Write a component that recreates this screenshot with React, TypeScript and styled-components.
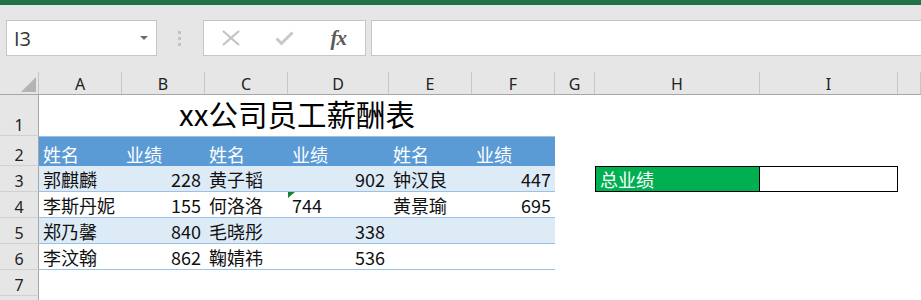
import React from 'react';
import styled, { createGlobalStyle } from 'styled-components';

const GlobalStyle = createGlobalStyle`
  html, body {
    margin: 0;
    padding: 0;
    background: #fff;
    overflow: hidden;
  }
  body {
    font-family: "Noto Sans", "Noto Sans CJK SC", sans-serif;
  }
`;

const Window = styled.div`
  width: 921px;
  height: 300px;
  overflow: hidden;
  display: flex;
  flex-direction: column;
`;

const TitleStrip = styled.div`
  height: 5px;
  background: #217346;
  flex-shrink: 0;
`;

const Toolbar = styled.div`
  height: 67px;
  box-sizing: border-box;
  background: #e6e6e6;
  display: flex;
  align-items: flex-start;
  padding: 15px 0 0 6px;
  flex-shrink: 0;
`;

const NameBox = styled.div`
  width: 151px;
  height: 36px;
  box-sizing: border-box;
  background: #fff;
  border: 1px solid #c6c6c6;
  display: flex;
  align-items: center;
  justify-content: space-between;
  padding: 0 8px 0 7px;
  font-family: "Open Sans", sans-serif;
  font-size: 20px;
  color: #333;
`;

const DropArrow = styled.span`
  width: 0;
  height: 0;
  border-left: 4px solid transparent;
  border-right: 4px solid transparent;
  border-top: 4px solid #6d6d6d;
`;

const Grip = styled.div`
  margin: 11px 0 0 21px;
  display: flex;
  flex-direction: column;
  gap: 3px;
  & > span {
    width: 3px;
    height: 3px;
    background: #c3c3c3;
  }
`;

const FxBox = styled.div`
  margin-left: 22px;
  width: 163px;
  height: 36px;
  box-sizing: border-box;
  background: #fff;
  border: 1px solid #c6c6c6;
  display: flex;
`;

const FxSlot = styled.div`
  width: 54px;
  display: flex;
  align-items: center;
  justify-content: center;
`;

const FxLabel = styled.span`
  font-family: "Liberation Serif", serif;
  font-style: italic;
  font-weight: bold;
  font-size: 21px;
  color: #5a5a5a;
  letter-spacing: -1px;
`;

const FormulaInput = styled.div`
  margin-left: 5px;
  margin-right: -2px;
  flex: 1;
  height: 36px;
  box-sizing: border-box;
  background: #fff;
  border: 1px solid #c6c6c6;
`;

const Sheet = styled.div`
  flex: 1;
  display: flex;
  flex-direction: column;
  background: #fff;
  overflow: hidden;
`;

const HeaderRow = styled.div`
  display: flex;
  height: 23px;
  box-sizing: border-box;
  background: #e6e6e6;
  border-bottom: 1px solid #a6a6a6;
  flex-shrink: 0;
`;

const Corner = styled.div`
  width: 39px;
  box-sizing: border-box;
  border-right: 1px solid #c6c6c6;
  display: flex;
  align-items: flex-end;
  justify-content: flex-end;
  padding: 0 2px 2px 0;
`;

const ColHead = styled.div<{ $w?: number }>`
  width: ${p => (p.$w ? `${p.$w}px` : 'auto')};
  flex: ${p => (p.$w ? 'none' : '1')};
  box-sizing: border-box;
  border-right: 1px solid #c6c6c6;
  display: flex;
  align-items: center;
  justify-content: center;
  font-size: 16px;
  line-height: 1;
  color: #222;
  padding-top: 2px;
`;

const Row = styled.div<{ $h: number }>`
  display: flex;
  height: ${p => p.$h}px;
  flex-shrink: 0;
`;

const RowHead = styled.div`
  width: 39px;
  box-sizing: border-box;
  background: #e6e6e6;
  border-right: 1px solid #a6a6a6;
  border-bottom: 1px solid #d0d0d0;
  display: flex;
  align-items: flex-end;
  justify-content: center;
  padding-bottom: 2px;
  font-size: 16px;
  line-height: 1;
  color: #222;
`;

const Cell = styled.div<{
  $w?: number;
  $align?: 'left' | 'right' | 'center';
  $fill?: string;
  $color?: string;
  $line?: string;
  $top?: string;
  $frame?: boolean;
}>`
  position: relative;
  width: ${p => (p.$w ? `${p.$w}px` : 'auto')};
  flex: ${p => (p.$w ? 'none' : '1')};
  box-sizing: border-box;
  display: flex;
  align-items: flex-end;
  justify-content: ${p =>
    p.$align === 'right' ? 'flex-end' : p.$align === 'center' ? 'center' : 'flex-start'};
  padding: 0 4px 3px 4px;
  background: ${p => p.$fill || 'transparent'};
  color: ${p => p.$color || '#111'};
  border-bottom: ${p => (p.$line ? `1px solid ${p.$line}` : 'none')};
  border-top: ${p => (p.$top ? `1px solid ${p.$top}` : 'none')};
  ${p => (p.$frame ? 'border: 1px solid #000;' : '')}
  font-family: "Noto Sans CJK SC", sans-serif;
  font-size: 18px;
  line-height: 1;
  white-space: nowrap;
`;

const Title = styled.div`
  width: 516px;
  display: flex;
  align-items: flex-end;
  justify-content: center;
  padding-bottom: 8px;
  box-sizing: border-box;
  font-family: "Noto Sans CJK SC", sans-serif;
  font-size: 29.5px;
  line-height: 1;
  color: #000;
`;

const ErrorFlag = styled.span`
  position: absolute;
  top: 0;
  left: 0;
  width: 0;
  height: 0;
  border-top: 6px solid #1a7f37;
  border-right: 7px solid transparent;
`;

const colWidths = [83, 83, 83, 101, 83, 83, 40, 165, 138];
const letters = ['A', 'B', 'C', 'D', 'E', 'F', 'G', 'H', 'I'];
const tableWidths = colWidths.slice(0, 6);

const BAND = '#ddebf7';
const LINE = '#9bc2e6';
const HEAD = '#5b9bd5';

type Entry = { v: string; num?: boolean; flag?: boolean };

const data: Entry[][] = [
  [{ v: '郭麒麟' }, { v: '228', num: true }, { v: '黄子韬' }, { v: '902', num: true }, { v: '钟汉良' }, { v: '447', num: true }],
  [{ v: '李斯丹妮' }, { v: '155', num: true }, { v: '何洛洛' }, { v: '744', flag: true }, { v: '黄景瑜' }, { v: '695', num: true }],
  [{ v: '郑乃馨' }, { v: '840', num: true }, { v: '毛晓彤' }, { v: '338', num: true }, { v: '' }, { v: '' }],
  [{ v: '李汶翰' }, { v: '862', num: true }, { v: '鞠婧祎' }, { v: '536', num: true }, { v: '' }, { v: '' }],
];

const headers = ['姓名', '业绩', '姓名', '业绩', '姓名', '业绩'];

const CloseIcon = () => (
  <svg width="18" height="16" viewBox="0 0 18 16">
    <path d="M1 1 L17 15 M17 1 L1 15" stroke="#c3c3c3" strokeWidth="2.2" fill="none" />
  </svg>
);

const CheckIcon = () => (
  <svg width="19" height="15" viewBox="0 0 19 15">
    <path d="M1.5 7.5 L6.5 12.5 L17.5 1.5" stroke="#c8c8c8" strokeWidth="3" fill="none" />
  </svg>
);

const CornerMark = () => (
  <svg width="15" height="15" viewBox="0 0 15 15">
    <polygon points="15,0 15,15 0,15" fill="#b4b4b4" />
  </svg>
);

const Blank = () => (
  <>
    <Cell $w={40} />
    <Cell $w={165} />
    <Cell $w={138} />
    <Cell />
  </>
);

const App = () => {
  return (
    <Window>
      <GlobalStyle />
      <TitleStrip />
      <Toolbar>
        <NameBox>
          <span>I3</span>
          <DropArrow />
        </NameBox>
        <Grip>
          <span />
          <span />
          <span />
        </Grip>
        <FxBox>
          <FxSlot><CloseIcon /></FxSlot>
          <FxSlot><CheckIcon /></FxSlot>
          <FxSlot><FxLabel>fx</FxLabel></FxSlot>
        </FxBox>
        <FormulaInput />
      </Toolbar>
      <Sheet>
        <HeaderRow>
          <Corner><CornerMark /></Corner>
          {letters.map((l, i) => (
            <ColHead key={l} $w={colWidths[i]}>{l}</ColHead>
          ))}
          <ColHead />
        </HeaderRow>

        <Row $h={41}>
          <RowHead>1</RowHead>
          <Title>xx公司员工薪酬表</Title>
          <Blank />
        </Row>

        <Row $h={30}>
          <RowHead>2</RowHead>
          {headers.map((h, i) => (
            <Cell key={i} $w={tableWidths[i]} $fill={HEAD} $color="#fff" $top={LINE}>{h}</Cell>
          ))}
          <Blank />
        </Row>

        {data.map((r, ri) => (
          <Row key={ri} $h={26}>
            <RowHead>{ri + 3}</RowHead>
            {r.map((c, ci) => (
              <Cell
                key={ci}
                $w={tableWidths[ci]}
                $align={c.num ? 'right' : 'left'}
                $fill={ri % 2 === 0 ? BAND : '#fff'}
                $line={LINE}
              >
                {c.flag && <ErrorFlag />}
                {c.v}
              </Cell>
            ))}
            {ri === 0 ? (
              <>
                <Cell $w={40} />
                <Cell $w={165} $fill="#00b050" $color="#fff" $frame>总业绩</Cell>
                <Cell $w={138} $frame style={{ borderLeft: 'none' }} />
                <Cell />
              </>
            ) : (
              <Blank />
            )}
          </Row>
        ))}

        <Row $h={26}>
          <RowHead>7</RowHead>
          <Cell $w={516} />
          <Blank />
        </Row>
        <Row $h={26}>
          <RowHead />
          <Cell $w={516} />
          <Blank />
        </Row>
      </Sheet>
    </Window>
  );
};

export default App;
